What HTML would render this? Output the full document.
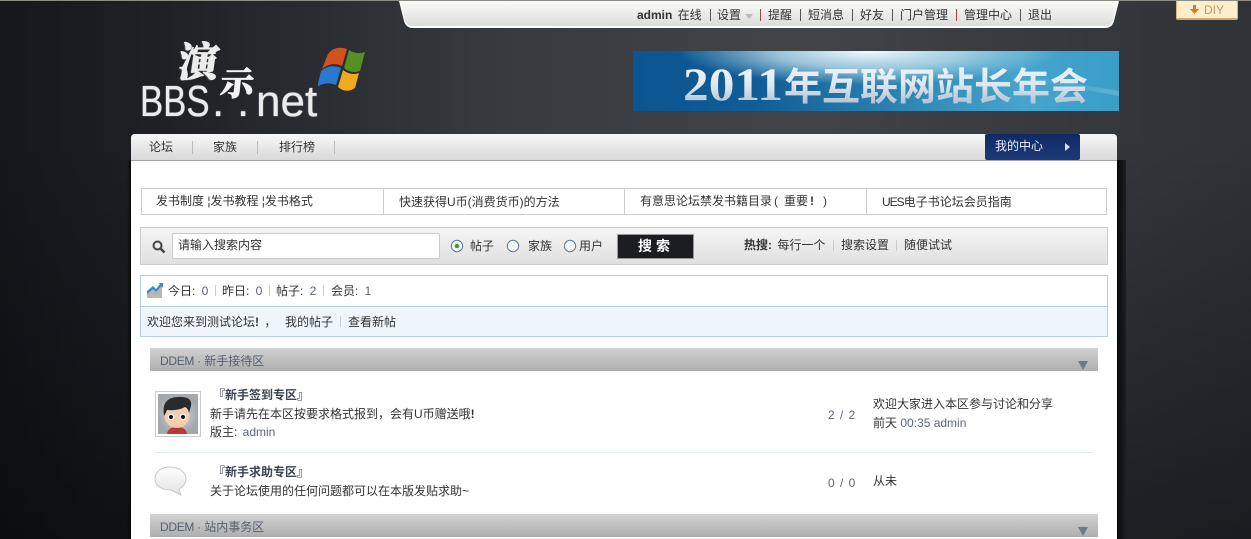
<!DOCTYPE html>
<html lang="zh"><head><meta charset="utf-8"><title>BBS</title>
<style>
html,body{margin:0;padding:0}
body{width:1251px;height:539px;overflow:hidden;position:relative;background:#1a1c1f;font-family:"Liberation Sans","WenQuanYi Zen Hei","Noto Sans CJK SC",sans-serif;font-size:12px;color:#333}
.a{position:absolute;white-space:nowrap;line-height:16px}
.sep{position:absolute;width:1px;background:#bbb}
.blue{color:#5a6478}
.n{margin-left:3px}
.lg{position:absolute;white-space:nowrap;top:78px;line-height:48px;font-size:44px;color:#ebebeb;transform-origin:0 0;text-shadow:0 0 1px #ebebeb}
.cell{position:absolute;top:188px;height:25px;border:1px solid #ccc;border-right:0;background:#fff;box-sizing:content-box}
.sec{position:absolute;left:150px;width:948px;height:23px;background:linear-gradient(#d2d2d2,#aeaeae)}
.sec span{position:absolute;left:10px;top:5px;color:#55606e;line-height:16px}
.sec em{font-style:normal;letter-spacing:-.3px}
.sec i{position:absolute;left:928px;top:13px;width:0;height:0;border:5px solid transparent;border-top:9px solid #6f7885;border-bottom:0}
</style></head><body>
<div style="position:absolute;left:0;top:0;width:1251px;height:539px;background:linear-gradient(rgba(0,0,0,0) 25%,rgba(0,0,0,.45) 100%),linear-gradient(90deg,#15171a 0,#212327 200px,#373b40 500px,#41454a 800px,#34383d 1100px,#2f3337 1251px)"></div>
<div style="position:absolute;left:0;top:0;width:1251px;height:1px;background:#8d8d88"></div>

<svg style="position:absolute;left:398px;top:1px" width="722" height="29"><defs><linearGradient id="g" x1="0" y1="0" x2="0" y2="1"><stop offset="0" stop-color="#fbfbfa"/><stop offset="1" stop-color="#dcdcda"/></linearGradient></defs><path d="M1 0H721L716 20Q714 27 707 27H15Q8 27 6 20Z" fill="#fff"/><path d="M3 0H719L715 20Q713 25 707 25H15Q9 25 7 20Z" fill="url(#g)"/></svg>
<div class="a" style="left:637px;top:7px;color:#333"><b>admin</b><span style="margin-left:2px"> 在线</span></div>
<div class="a" style="left:717px;top:7px">设置</div><div style="position:absolute;left:745px;top:14px;border:4px solid transparent;border-top:5px solid #bbb;border-bottom:0"></div>
<div class="a" style="left:768px;top:7px">提醒</div><div class="a" style="left:808px;top:7px">短消息</div><div class="a" style="left:860px;top:7px">好友</div><div class="a" style="left:900px;top:7px">门户管理</div><div class="a" style="left:964px;top:7px">管理中心</div><div class="a" style="left:1028px;top:7px">退出</div>
<div class="sep" style="left:710px;top:9px;height:12px;background:#555"></div><div class="sep" style="left:760px;top:9px;height:12px;background:#a44"></div><div class="sep" style="left:800px;top:9px;height:12px;background:#555"></div><div class="sep" style="left:852px;top:9px;height:12px;background:#555"></div><div class="sep" style="left:892px;top:9px;height:12px;background:#555"></div><div class="sep" style="left:956px;top:9px;height:12px;background:#a44"></div><div class="sep" style="left:1020px;top:9px;height:12px;background:#555"></div>

<div style="position:absolute;left:1176px;top:1px;width:60px;height:17px;background:#fdeecb;border:1px solid #dcae72;border-top:0;border-bottom:2px solid #d6a666;border-radius:0 0 2px 2px"></div>
<svg style="position:absolute;left:1190px;top:5px" width="10" height="10"><path d="M3 0H6V4H9L4.500 9 0 4H3Z" fill="#d27c22"/></svg>
<div class="a" style="left:1204px;top:2px;color:#bd9a6c">DIY</div>

<div class="lg" style="left:140px;transform:scaleX(.79)">BBS</div>
<div class="lg" style="left:212px">.</div>
<div class="lg" style="left:237px">.</div>
<div class="lg" style="left:256px">net</div>
<div class="a" style="left:179px;top:38px;line-height:44px;font-size:40px;color:#ececec;font-family:'Noto Serif CJK SC',serif;font-weight:900;-webkit-text-stroke:1px #ececec;transform:skewX(-8deg);text-shadow:-1px 1px 1px #555">演</div>
<div class="a" style="left:221px;top:64px;line-height:36px;font-size:33px;color:#f4f4f4;font-family:'Noto Serif CJK SC',serif;font-weight:900;-webkit-text-stroke:1px #f4f4f4;transform:skewX(-6deg)">示</div>
<svg style="position:absolute;left:318px;top:46px" width="50" height="46"><path d="M10 8Q17 -1 29 3L24 20Q14 15 4 23Z" fill="#d4501c"/><path d="M31 4Q38 9 47 6L42 25Q33 28 26 22Z" fill="#568f22"/><path d="M3 25Q12 17 23 22L18 39Q8 35 -1 41Z" fill="#2a78cf"/><path d="M25 24Q33 30 41 27L37 42Q28 48 20 41Z" fill="#efaa1e"/></svg>

<svg style="position:absolute;left:633px;top:51px" width="486" height="60"><defs><linearGradient id="b" x1="0" x2="1" y1="0" y2="0"><stop offset="0" stop-color="#0b5590"/><stop offset=".25" stop-color="#105c96"/><stop offset=".55" stop-color="#2c84b2"/><stop offset=".8" stop-color="#45a5cd"/><stop offset="1" stop-color="#3a9ec8"/></linearGradient><radialGradient id="w" cx=".5" cy=".5" r=".5"><stop offset="0" stop-color="#f2fafc"/><stop offset=".5" stop-color="#cfe9f2" stop-opacity=".7"/><stop offset="1" stop-color="#bfe3ee" stop-opacity="0"/></radialGradient><linearGradient id="t" x1="0" x2="0" y1="0" y2="1"><stop offset="0" stop-color="#f6f9fb"/><stop offset=".5" stop-color="#e0e8ef"/><stop offset="1" stop-color="#9fb5c9"/></linearGradient><linearGradient id="st" x1="0" x2="1" y1="0" y2="0"><stop offset="0" stop-color="#8fd0e6" stop-opacity="0"/><stop offset="1" stop-color="#8fd0e6" stop-opacity=".35"/></linearGradient></defs><rect width="486" height="60" fill="url(#b)"/><clipPath id="c"><rect width="486" height="60"/></clipPath><ellipse cx="235" cy="0" rx="190" ry="34" fill="url(#w)" clip-path="url(#c)"/><path d="M380 22L486 40V45L380 26Z" fill="url(#st)"/><text x="50" y="49" font-family="'Liberation Serif',serif" font-weight="bold" font-size="47" fill="url(#t)" textLength="100" lengthAdjust="spacingAndGlyphs">2011</text><text x="151" y="49" font-family="'Noto Sans CJK SC',sans-serif" font-weight="bold" font-size="38" fill="url(#t)" textLength="304" lengthAdjust="spacingAndGlyphs">年互联网站长年会</text></svg>

<div style="position:absolute;left:1117px;top:160px;width:9px;height:379px;background:linear-gradient(90deg,#08090a,#1d1f22)"></div>
<div style="position:absolute;left:127px;top:160px;width:4px;height:379px;background:linear-gradient(90deg,rgba(0,0,0,0),#08090a)"></div>
<div style="position:absolute;left:131px;top:134px;width:986px;height:405px;background:#fff;border-radius:4px 4px 0 0"></div>
<div style="position:absolute;left:131px;top:134px;width:986px;height:26px;background:linear-gradient(#f7f7f7,#d9d9d9);border-bottom:1px solid #a3a3a3;border-radius:4px 4px 0 0"></div>
<div class="a" style="left:149px;top:139px">论坛</div><div class="a" style="left:213px;top:139px">家族</div><div class="a" style="left:279px;top:139px">排行榜</div>
<div class="sep" style="left:192px;top:141px;height:13px"></div><div class="sep" style="left:257px;top:141px;height:13px"></div><div class="sep" style="left:334px;top:141px;height:13px"></div>
<div style="position:absolute;left:985px;top:134px;width:95px;height:26px;background:linear-gradient(#0f2a63,#1d3a78);border-radius:2px"></div>
<div class="a" style="left:995px;top:138px;color:#eef">我的中心</div>
<div style="position:absolute;left:1065px;top:143px;border:4px solid transparent;border-left:5px solid #dde;border-right:0"></div>

<div class="cell" style="left:141px;width:241px"></div><div class="cell" style="left:383px;width:240px"></div><div class="cell" style="left:624px;width:241px"></div><div class="cell" style="left:866px;width:239px;border-right:1px solid #ccc"></div>
<div class="a" style="left:156px;top:193px">发书制度 ¦发书教程 ¦发书格式</div>
<div class="a" style="left:399px;top:194px">快速获得U币(消费货币)的方法</div>
<div class="a" style="left:640px;top:193px">有意思论坛禁发书籍目录<span style="margin:0 6px 0 2px">(</span>重要<b style="margin:0 9px 0 2px">!</b>)</div>
<div class="a" style="left:882px;top:194px"><span style="letter-spacing:-1px">UES</span>电子书论坛会员指南</div>

<div style="position:absolute;left:140px;top:227px;width:966px;height:36px;background:linear-gradient(#f5f5f5,#e0e0e0);border:1px solid #ccc"></div>
<svg style="position:absolute;left:152px;top:240px" width="14" height="14"><circle cx="5.500" cy="5.500" r="4" fill="none" stroke="#444" stroke-width="2"/><path d="M8.500 8.500L12.500 12.500" stroke="#444" stroke-width="2.500"/></svg>
<div style="position:absolute;left:172px;top:233px;width:266px;height:24px;background:#fff;border:1px solid #ccc;border-radius:2px"></div>
<div class="a" style="left:178px;top:237px">请输入搜索内容</div>
<svg style="position:absolute;left:450px;top:239px" width="14" height="14"><circle cx="7" cy="7" r="5.700" fill="#f4f6f8" stroke="#5b7a99"/><circle cx="7" cy="7" r="2.300" fill="#3f9a4a"/></svg>
<div class="a" style="left:470px;top:238px">帖子</div>
<svg style="position:absolute;left:506px;top:239px" width="14" height="14"><circle cx="7" cy="7" r="5.700" fill="#f4f6f8" stroke="#5b7a99"/></svg>
<div class="a" style="left:528px;top:238px">家族</div>
<svg style="position:absolute;left:564px;top:239px" width="14" height="14"><circle cx="6" cy="7" r="5.700" fill="#f4f6f8" stroke="#5b7a99"/></svg>
<div class="a" style="left:579px;top:238px">用户</div>
<div style="position:absolute;left:617px;top:234px;width:75px;height:23px;background:#1c1d20;border:1px solid #999"></div>
<div class="a" style="left:638px;top:238px;color:#fff;font-size:14px;font-weight:bold;letter-spacing:4px">搜索</div>
<div class="a" style="left:744px;top:237px"><b>热搜:</b><span style="margin-left:2px"> 每行一个</span></div>
<div class="sep" style="left:833px;top:240px;height:11px;background:#ccc"></div><div class="a" style="left:841px;top:237px">搜索设置</div>
<div class="sep" style="left:896px;top:240px;height:11px;background:#ccc"></div><div class="a" style="left:904px;top:237px">随便试试</div>

<div style="position:absolute;left:140px;top:275px;width:966px;height:30px;background:#fff;border:1px solid #b4cfd8"></div>
<div style="position:absolute;left:140px;top:307px;width:966px;height:29px;background:#eff6fb;border:1px solid #b4cfd8;border-top:0"></div>
<svg style="position:absolute;left:146px;top:282px" width="18" height="17"><path d="M1 9L7 5 10 8 16 2V14H1Z" fill="#aeb7bf"/><path d="M1 9L7 4 10 7 14 2 12 1H17V6L15.500 4 10 10 7 7 1 12Z" fill="#3d87c7"/><rect x="1" y="13" width="15" height="3" fill="#c9b98e"/></svg>
<div class="a" style="left:168px;top:283px">今日: <span class="blue n">0</span></div><div class="sep" style="left:215px;top:285px;height:11px;background:#ccc"></div>
<div class="a" style="left:222px;top:283px">昨日: <span class="blue n">0</span></div><div class="sep" style="left:269px;top:285px;height:11px;background:#ccc"></div>
<div class="a" style="left:276px;top:283px">帖子: <span class="blue n">2</span></div><div class="sep" style="left:323px;top:285px;height:11px;background:#ccc"></div>
<div class="a" style="left:331px;top:283px">会员: <span class="blue n">1</span></div>
<div class="a" style="left:147px;top:314px">欢迎您来到测试论坛<b>!</b> <span style="margin-left:2px">，</span></div><div class="a" style="left:285px;top:314px">我的帖子</div><div class="sep" style="left:340px;top:316px;height:11px;background:#ccc"></div><div class="a" style="left:348px;top:314px">查看新帖</div>

<div class="sec" style="top:348px"><span><em>DDEM ·</em> 新手接待区</span><i></i></div>
<div style="position:absolute;left:155px;top:391px;width:44px;height:44px;border:1px solid #ccc;background:#fff"></div>
<svg style="position:absolute;left:158px;top:394px" width="40" height="40"><defs><radialGradient id="s"><stop offset="0" stop-color="#d8dadc"/><stop offset="1" stop-color="#a5a8ab"/></radialGradient></defs><rect width="40" height="40" fill="url(#s)"/><path d="M9 40Q10 33 19 33T29 40Z" fill="#b83a36"/><ellipse cx="19" cy="22" rx="12.500" ry="12" fill="#f3cdb0"/><path d="M6 22Q3 4 19 3T33 12L31 19Q30 14 27 13Q20 17 9 16Q8 19 6 22Z" fill="#2a2a2c"/><circle cx="13" cy="23" r="3.200" fill="#fff"/><circle cx="25" cy="23" r="3.200" fill="#fff"/><circle cx="13" cy="23" r="2" fill="#111"/><circle cx="25" cy="23" r="2" fill="#111"/></svg>
<div class="a" style="left:213px;top:387px;font-weight:bold;color:#3c4350">『新手签到专区』</div>
<div class="a" style="left:210px;top:406px">新手请先在本区按要求格式报到，会有U币赠送哦<b>!</b></div>
<div class="a" style="left:210px;top:424px">版主: <span class="blue" style="margin-left:2px">admin</span></div>
<div class="a blue" style="left:828px;top:407px;letter-spacing:1px">2 / 2</div>
<div class="a" style="left:873px;top:396px">欢迎大家进入本区参与讨论和分享</div>
<div class="a" style="left:873px;top:415px">前天 <span class="blue">00:35 admin</span></div>
<div style="position:absolute;left:155px;top:452px;width:938px;height:1px;background:#e2edf1"></div>
<svg style="position:absolute;left:154px;top:466px" width="34" height="32"><defs><linearGradient id="bb" x1="0" y1="0" x2="0" y2="1"><stop offset="0" stop-color="#fff"/><stop offset="1" stop-color="#e2e2e2"/></linearGradient></defs><path d="M16 1C7 1 1 6 1 13C1 20 8 24 17 24L27 29 25 23C29 21 32 17 32 13C32 6 25 1 16 1Z" fill="url(#bb)" stroke="#c8c8c8"/></svg>
<div class="a" style="left:213px;top:464px;font-weight:bold;color:#3c4350">『新手求助专区』</div>
<div class="a" style="left:210px;top:483px">关于论坛使用的任何问题都可以在本版发贴求助~</div>
<div class="a blue" style="left:828px;top:475px;letter-spacing:1px">0 / 0</div>
<div class="a" style="left:873px;top:473px">从未</div>
<div class="sec" style="top:514px"><span><em>DDEM ·</em> 站内事务区</span><i></i></div>
</body></html>
